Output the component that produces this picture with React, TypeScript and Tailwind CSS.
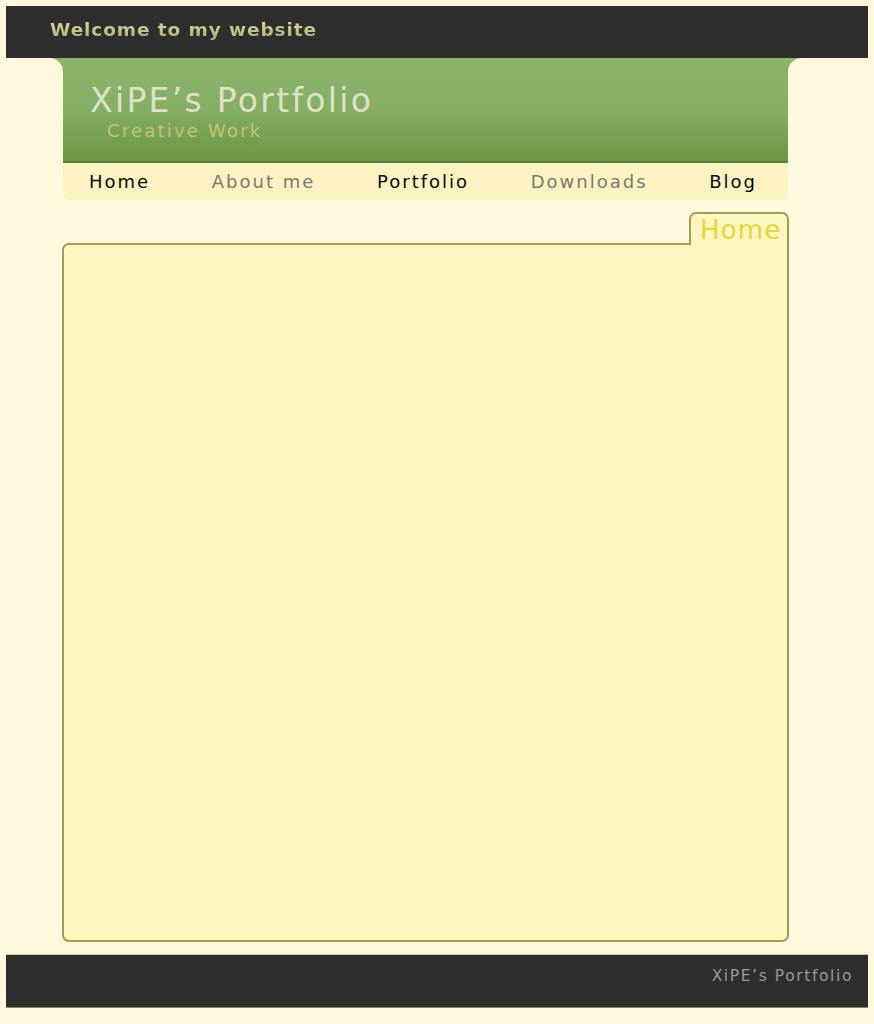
import React from "react"

const navItems = [
  { label: "Home", active: true },
  { label: "About me", active: false },
  { label: "Portfolio", active: true },
  { label: "Downloads", active: false },
  { label: "Blog", active: true },
]

export default function App() {
  return (
    <div className="min-h-[1024px] bg-[#fef9dd] p-[6px] font-['DejaVu_Sans',Verdana,sans-serif]">
      {/* Top bar */}
      <div className="h-[52px] bg-[#2e2e2e] flex items-center pl-[44px] pb-[4px]">
        <span className="text-[18.5px] font-bold tracking-[0.9px] bg-gradient-to-b from-[#e8e4ac] to-[#a6a268] bg-clip-text text-transparent">
          Welcome to my website
        </span>
      </div>

      <div className="ml-[57px] w-[725px]">
        {/* Header */}
        <div className="relative h-[105px] bg-gradient-to-b from-[#8cb56c] via-[#84ae63] to-[#6a9545] border-b-2 border-[#5b7f37] pl-[27px] pt-[25px]">
          <div className="absolute -left-[14px] top-0 w-[14px] h-[14px] bg-[#8cb56c]">
            <div className="w-full h-full bg-[#fef9dd] rounded-tr-[14px]" />
          </div>
          <div className="absolute -right-[14px] top-0 w-[14px] h-[14px] bg-[#8cb56c]">
            <div className="w-full h-full bg-[#fef9dd] rounded-tl-[14px]" />
          </div>
          <div className="text-[33px] leading-[36px] tracking-[2.3px] text-[#dfe0c8]">XiPE’s Portfolio</div>
          <div className="ml-[17px] text-[18px] leading-[24px] tracking-[2.2px] text-[#c6c26f]">Creative Work</div>
        </div>

        {/* Navigation */}
        <div className="h-[37px] bg-[#fdf3c2] rounded-b-[5px] flex items-center justify-between pl-[26px] pr-[31px]">
          {navItems.map((item) => (
            <span
              key={item.label}
              className={
                item.active
                  ? "text-[18px] tracking-[2px] text-[#0a0a0a]"
                  : "text-[18px] tracking-[2px] text-[#7a7a72]"
              }
            >
              {item.label}
            </span>
          ))}
        </div>

        {/* Content */}
        <div className="mt-[12px] -mx-px">
          <div className="flex justify-end">
            <div className="relative z-10 -mb-[2px] w-[100px] h-[33px] bg-[#fdf6c0] border-2 border-b-0 border-[#a09d4e] rounded-t-[7px] flex items-center pl-[9px]">
              <span className="text-[26px] leading-none tracking-[1.2px] text-[#e3d935]">Home</span>
            </div>
          </div>
          <div className="h-[699px] bg-[#fdf6c0] border-2 border-[#a09d4e] rounded-[7px] rounded-tr-none" />
        </div>
      </div>

      {/* Footer */}
      <div className="mt-[12px] h-[54px] bg-[#2e2e2e] border-t border-[#c8c6a0] border-b border-b-[#8e8b55] flex items-center justify-end pr-[15px] pb-[9px]">
        <span className="text-[15.5px] tracking-[1.6px] text-[#9a9a96]">XiPE’s Portfolio</span>
      </div>
    </div>
  )
}
